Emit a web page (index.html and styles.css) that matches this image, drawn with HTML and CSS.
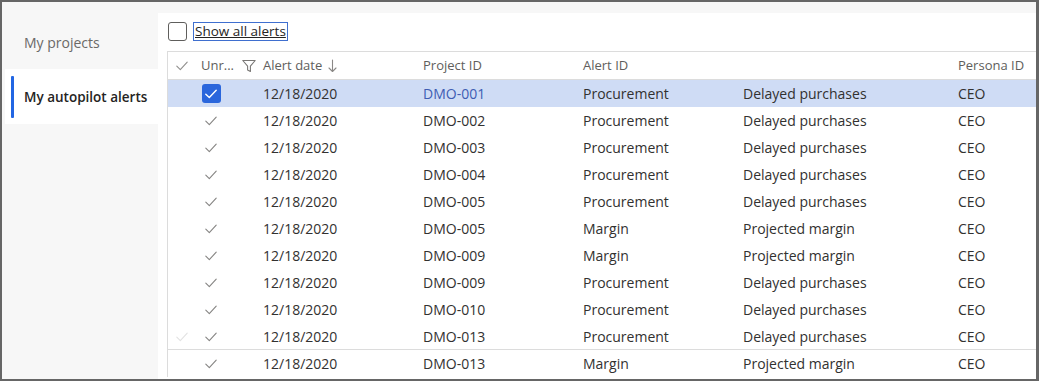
FILE: index.html
```html
<!DOCTYPE html>
<html>
<head>
<meta charset="utf-8">
<link rel="stylesheet" href="styles.css">
</head>
<body>
<div class="frame">
  <nav class="sidebar">
    <div class="nav-item"><span class="nav-bar"></span><span class="nav-text">My projects</span></div>
    <div class="nav-item active"><span class="nav-bar"></span><span class="nav-text">My autopilot alerts</span></div>
  </nav>
  <main class="main">
    <div class="toolbar">
      <span class="cb"></span>
      <span class="cb-label">Show all alerts</span>
    </div>
    <div class="grid">
      <div class="row head">
        <div class="cell sel"><svg class="chk hdr" width="12" height="10" viewBox="0 0 12 10"><path d="M0.8 5.2 L4.3 8.6 L11.2 1.2"/></svg></div>
        <div class="cell unr">Unr...<svg class="funnel" width="14" height="14" viewBox="0 0 14 14"><path d="M0.8 1.5 H13.2 L8.4 7.2 V12.5 L5.6 11 V7.2 Z"/></svg></div>
        <div class="cell">Alert date<svg class="sort" width="9" height="14" viewBox="0 0 9 14"><path d="M4.5 1 V12.5 M1 9 L4.5 12.5 L8 9"/></svg></div>
        <div class="cell">Project ID</div>
        <div class="cell">Alert ID</div>
        <div class="cell"></div>
        <div class="cell">Persona ID</div>
      </div>

      <div class="row selected">
        <div class="cell sel"></div>
        <div class="cell mark"><span class="cb-on"><svg width="12" height="10" viewBox="0 0 12 10"><path d="M0.8 5.2 L4.3 8.6 L11.2 1.2"/></svg></span></div>
        <div class="cell">12/18/2020</div>
        <div class="cell link">DMO-001</div>
        <div class="cell">Procurement</div>
        <div class="cell">Delayed purchases</div>
        <div class="cell">CEO</div>
      </div>
      <div class="row">
        <div class="cell sel"></div>
        <div class="cell mark"><svg class="chk" width="12" height="10" viewBox="0 0 12 10"><path d="M0.8 5.2 L4.3 8.6 L11.2 1.2"/></svg></div>
        <div class="cell">12/18/2020</div><div class="cell">DMO-002</div><div class="cell">Procurement</div><div class="cell">Delayed purchases</div><div class="cell">CEO</div>
      </div>
      <div class="row">
        <div class="cell sel"></div>
        <div class="cell mark"><svg class="chk" width="12" height="10" viewBox="0 0 12 10"><path d="M0.8 5.2 L4.3 8.6 L11.2 1.2"/></svg></div>
        <div class="cell">12/18/2020</div><div class="cell">DMO-003</div><div class="cell">Procurement</div><div class="cell">Delayed purchases</div><div class="cell">CEO</div>
      </div>
      <div class="row">
        <div class="cell sel"></div>
        <div class="cell mark"><svg class="chk" width="12" height="10" viewBox="0 0 12 10"><path d="M0.8 5.2 L4.3 8.6 L11.2 1.2"/></svg></div>
        <div class="cell">12/18/2020</div><div class="cell">DMO-004</div><div class="cell">Procurement</div><div class="cell">Delayed purchases</div><div class="cell">CEO</div>
      </div>
      <div class="row">
        <div class="cell sel"></div>
        <div class="cell mark"><svg class="chk" width="12" height="10" viewBox="0 0 12 10"><path d="M0.8 5.2 L4.3 8.6 L11.2 1.2"/></svg></div>
        <div class="cell">12/18/2020</div><div class="cell">DMO-005</div><div class="cell">Procurement</div><div class="cell">Delayed purchases</div><div class="cell">CEO</div>
      </div>
      <div class="row">
        <div class="cell sel"></div>
        <div class="cell mark"><svg class="chk" width="12" height="10" viewBox="0 0 12 10"><path d="M0.8 5.2 L4.3 8.6 L11.2 1.2"/></svg></div>
        <div class="cell">12/18/2020</div><div class="cell">DMO-005</div><div class="cell">Margin</div><div class="cell">Projected margin</div><div class="cell">CEO</div>
      </div>
      <div class="row">
        <div class="cell sel"></div>
        <div class="cell mark"><svg class="chk" width="12" height="10" viewBox="0 0 12 10"><path d="M0.8 5.2 L4.3 8.6 L11.2 1.2"/></svg></div>
        <div class="cell">12/18/2020</div><div class="cell">DMO-009</div><div class="cell">Margin</div><div class="cell">Projected margin</div><div class="cell">CEO</div>
      </div>
      <div class="row">
        <div class="cell sel"></div>
        <div class="cell mark"><svg class="chk" width="12" height="10" viewBox="0 0 12 10"><path d="M0.8 5.2 L4.3 8.6 L11.2 1.2"/></svg></div>
        <div class="cell">12/18/2020</div><div class="cell">DMO-009</div><div class="cell">Procurement</div><div class="cell">Delayed purchases</div><div class="cell">CEO</div>
      </div>
      <div class="row">
        <div class="cell sel"></div>
        <div class="cell mark"><svg class="chk" width="12" height="10" viewBox="0 0 12 10"><path d="M0.8 5.2 L4.3 8.6 L11.2 1.2"/></svg></div>
        <div class="cell">12/18/2020</div><div class="cell">DMO-010</div><div class="cell">Procurement</div><div class="cell">Delayed purchases</div><div class="cell">CEO</div>
      </div>
      <div class="row hover">
        <div class="cell sel"><svg class="chk faint" width="12" height="10" viewBox="0 0 12 10"><path d="M0.8 5.2 L4.3 8.6 L11.2 1.2"/></svg></div>
        <div class="cell mark"><svg class="chk" width="12" height="10" viewBox="0 0 12 10"><path d="M0.8 5.2 L4.3 8.6 L11.2 1.2"/></svg></div>
        <div class="cell">12/18/2020</div><div class="cell">DMO-013</div><div class="cell">Procurement</div><div class="cell">Delayed purchases</div><div class="cell">CEO</div>
      </div>
      <div class="row">
        <div class="cell sel"></div>
        <div class="cell mark"><svg class="chk" width="12" height="10" viewBox="0 0 12 10"><path d="M0.8 5.2 L4.3 8.6 L11.2 1.2"/></svg></div>
        <div class="cell">12/18/2020</div><div class="cell">DMO-013</div><div class="cell">Margin</div><div class="cell">Projected margin</div><div class="cell">CEO</div>
      </div>
    </div>
  </main>
</div>
</body>
</html>
```

FILE: styles.css
```css
* { box-sizing: border-box; }
html, body { margin: 0; padding: 0; background: #ffffff; }
body {
  font-family: "Open Sans", "Noto Sans", sans-serif;
  font-size: 14px;
  color: #323130;
}
.frame {
  width: 1039px;
  height: 381px;
  border: 2px solid #666666;
  border-right-width: 3px;
  display: flex;
  background: #f7f7f7;
  overflow: hidden;
}
.sidebar {
  width: 156px;
  flex: none;
  padding-top: 13px;
  display: flex;
  flex-direction: column;
}
.nav-item {
  height: 54px;
  margin-left: 3px;
  padding-left: 6px;
  display: flex;
  align-items: center;
  color: #6b6967;
}
.nav-bar {
  width: 3px;
  height: 42px;
  background: transparent;
  border-radius: 1px;
  flex: none;
}
.nav-text { margin-left: 10px; white-space: nowrap; }
.nav-item.active {
  background: #ffffff;
  color: #252423;
  font-weight: 600;
  font-size: 13.5px;
  height: 55px;
}
.nav-item.active .nav-bar { background: #2266e3; }

.main {
  flex: 1;
  margin-top: 11px;
  background: #ffffff;
  padding: 9px 0 0 9px;
  min-width: 0;
}
.toolbar {
  height: 19px;
  display: flex;
  align-items: center;
  margin-bottom: 10px;
  font-size: 13.5px;
}
.cb {
  width: 19px;
  height: 19px;
  border: 1px solid #5f5e5c;
  border-radius: 3px;
  margin-left: 1px;
  flex: none;
}
.cb-label {
  margin-left: 6px;
  height: 19px;
  line-height: 17px;
  padding: 0 1px;
  border: 1px solid #3f6fcf;
  text-decoration: underline;
  color: #252423;
}
.grid {
  border-top: 1px solid #dcdcdc;
  border-left: 1px solid #dcdcdc;
}
.row {
  display: grid;
  grid-template-columns: 28px 67px 160px 160px 160px 215px 1fr;
  height: 27px;
  line-height: 27px;
  white-space: nowrap;
}
.row.head {
  color: #605e5c;
  font-size: 13px;
  border-bottom: 1px solid #dcdcdc;
  height: 28px;
}
.cell { display: flex; align-items: center; overflow: visible; }
.sel { justify-content: center; padding-left: 0; }
.unr { padding-left: 5px; }
.mark { justify-content: center; width: 30px; }
.row.selected { background: #cfdcf5; }
.row.hover { box-shadow: inset 0 -1px 0 #dcdcdc; }
.link { color: #3e5db3; }
svg path { fill: none; stroke-linecap: round; stroke-linejoin: round; }
.chk path { stroke: #858482; stroke-width: 1.1; }
.chk.hdr path { stroke: #8f8e8c; }
.chk.faint path { stroke: #e2e2e2; }
.funnel { margin-left: 8px; }
.funnel path { stroke: #7a7876; stroke-width: 1.1; }
.sort { margin-left: 6px; }
.sort path { stroke: #8a8886; stroke-width: 1.1; }
.cb-on {
  width: 19px;
  height: 19px;
  border-radius: 3px;
  background: #2a66dc;
  display: flex;
  align-items: center;
  justify-content: center;
}
.cb-on path { stroke: #ffffff; stroke-width: 1.4; }
```
